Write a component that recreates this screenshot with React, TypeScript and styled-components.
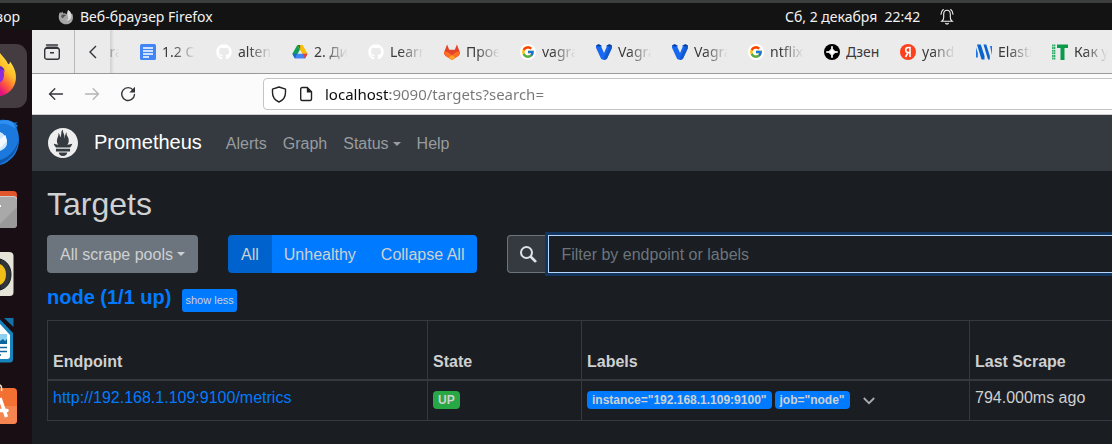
import React from "react";
import styled, { createGlobalStyle, css } from "styled-components";
import { FaGithub } from "react-icons/fa";
import { FcGoogle } from "react-icons/fc";
import { SiPrometheus } from "react-icons/si";

const GlobalStyle = createGlobalStyle`
  *, *::before, *::after { box-sizing: border-box; }
  body {
    margin: 0;
    background: #1a1d21;
    color: #ced0d2;
    font: 16px/24px "Liberation Sans", Arial, sans-serif;
    overflow: hidden;
  }
  button, input, select { font: inherit; margin: 0; }
  svg { display: block; flex: none; }
`;

const uiFont = css`
  font-family: "Noto Sans", "Open Sans", sans-serif;
`;

/* ---------- Desktop shell ---------- */

const Desktop = styled.div`
  display: flex;
  flex-direction: column;
  min-height: 100vh;
`;

const TopBar = styled.header`
  ${uiFont}
  display: grid;
  grid-template-columns: 1fr auto 1fr;
  align-items: center;
  height: 30px;
  border-top: 3px solid #3c3f3e;
  background: #131313;
  color: #f2f2f2;
  font-size: 14px;
  line-height: 27px;
`;

const TopLeft = styled.div`
  display: flex;
  align-items: center;
`;

const Activities = styled.button`
  display: flex;
  justify-content: flex-end;
  width: 20px;
  padding: 0;
  border: 0;
  background: none;
  color: inherit;
  overflow: hidden;
`;

const AppMenu = styled.button`
  display: flex;
  align-items: center;
  gap: 6px;
  margin-left: 38px;
  padding: 0;
  border: 0;
  background: none;
  color: inherit;
`;

const Clock = styled.button`
  display: flex;
  align-items: center;
  gap: 20px;
  padding: 0;
  border: 0;
  background: none;
  color: inherit;
  white-space: pre;
`;

const ClockSlot = styled.div`
  grid-column: 3;
  display: flex;
  justify-content: flex-start;
  padding-left: 229px;
`;

const Workspace = styled.div`
  display: flex;
  flex: 1;
`;

const Dock = styled.nav`
  display: flex;
  flex-direction: column;
  flex: none;
  gap: 2px;
  width: 32px;
  padding-top: 14px;
  background: #190e14;
`;

const DockItem = styled.button<{ $active?: boolean }>`
  width: ${(p) => (p.$active ? "27px" : "32px")};
  height: 64px;
  padding: 0;
  border: 0;
  border-radius: 0 11px 11px 0;
  background: ${(p) => (p.$active ? "#443c41" : "transparent")};
  overflow: hidden;
`;

const BrowserWindow = styled.div`
  flex: 1;
  min-width: 0;
  overflow: hidden;
`;

/* ---------- Browser chrome ---------- */

const TabBar = styled.div`
  ${uiFont}
  display: flex;
  height: 44px;
  border-bottom: 1px solid #999;
  background: #ebebeb;
  color: #3a3a3a;
  font-size: 14px;
`;

const ChromeButton = styled.button<{ $w: number; $divider?: boolean }>`
  display: flex;
  align-items: center;
  justify-content: center;
  flex: none;
  width: ${(p) => p.$w}px;
  padding: 0 ${(p) => (p.$divider ? "2px" : "0")} 0 0;
  border: 0;
  border-right: ${(p) => (p.$divider ? "1px solid #b9b9b9" : "0")};
  background: none;
  color: #33333a;
`;

const TabStrip = styled.div`
  display: flex;
  flex: 1;
  min-width: 0;
  overflow: hidden;
  box-shadow: inset 4px 0 3px -2px #cfcfcf;
`;

const TabItem = styled.button<{ $cut?: boolean }>`
  display: flex;
  align-items: center;
  justify-content: ${(p) => (p.$cut ? "flex-end" : "flex-start")};
  flex: none;
  gap: 6px;
  width: ${(p) => (p.$cut ? "22px" : "76px")};
  padding: 0 11px 0 ${(p) => (p.$cut ? "0" : "8px")};
  border: 0;
  background: none;
  color: inherit;
  overflow: hidden;
`;

const TabTitle = styled.span<{ $fits?: boolean }>`
  flex: none;
  width: 35px;
  overflow: hidden;
  text-align: left;
  white-space: nowrap;
  line-height: 24px;
  mask-image: ${(p) => (p.$fits ? "none" : "linear-gradient(90deg, #000 30%, transparent 96%)")};
`;

const UrlBar = styled.div`
  ${uiFont}
  display: flex;
  align-items: center;
  height: 41px;
  border-bottom: 1px solid #ccc;
  background: #fbfbfb;
`;

const NavButtons = styled.div`
  display: flex;
  flex: none;
  width: 231px;
  padding-left: 6px;
`;

const AddressBox = styled.label`
  display: flex;
  align-items: center;
  flex: 1;
  height: 32px;
  margin-right: -8px;
  padding-left: 7px;
  gap: 11px;
  border: 1px solid #c4c4c4;
  border-radius: 4px;
  background: #fff;
`;

const AddressInput = styled.input`
  flex: 1;
  min-width: 0;
  height: 24px;
  padding: 0;
  border: 0;
  outline: 0;
  background: linear-gradient(90deg, #0c0c0d 65px, #777 65px);
  background-clip: text;
  -webkit-background-clip: text;
  color: transparent;
  caret-color: #0c0c0d;
  font-size: 15px;
`;

/* ---------- Prometheus page ---------- */

const Navbar = styled.nav`
  display: flex;
  align-items: center;
  height: 56px;
  padding: 0 16px;
  background: #343a40;
`;

const Brand = styled.a`
  display: flex;
  align-items: center;
  gap: 16px;
  margin-right: 16px;
  color: #fff;
  font-size: 20px;
  text-decoration: none;
`;

const BrandName = styled.span`
  padding-bottom: 2px;
`;

const NavLink = styled.a`
  display: flex;
  align-items: center;
  gap: 4px;
  padding: 2px 8px 0;
  color: #999c9f;
  text-decoration: none;
`;

const Caret = styled.span`
  width: 0;
  height: 0;
  border: 4px solid transparent;
  border-top-color: currentColor;
  border-bottom: 0;
`;

const Page = styled.main`
  padding: 14px 0 0 15px;
`;

const Title = styled.h2`
  margin: 0 0 12px;
  font-size: 32px;
  font-weight: 400;
  line-height: 38px;
`;

const Filters = styled.div`
  display: flex;
  gap: 30px;
  margin-bottom: 12px;
`;

const PoolPicker = styled.div`
  position: relative;
  color: #ced0d2;

  ${Caret} {
    position: absolute;
    top: 17px;
    right: 13px;
    pointer-events: none;
  }
`;

const PoolSelect = styled.select`
  appearance: none;
  display: block;
  width: 151px;
  height: 38px;
  padding: 2px 24px 0 13px;
  border: 0;
  border-radius: 4px;
  background: #6c757d;
  color: inherit;
`;

const ButtonGroup = styled.div`
  display: flex;
  border-radius: 4px;
  overflow: hidden;
`;

const GroupButton = styled.button<{ $active?: boolean }>`
  position: relative;
  z-index: ${(p) => (p.$active ? 1 : 0)};
  height: 38px;
  padding: 2px 13px 0;
  border: 0;
  background: ${(p) => (p.$active ? "#0062cc" : "#007bff")};
  color: #ced0d2;

  & + & { margin-left: -1px; }
`;

const SearchGroup = styled.label`
  display: flex;
  flex: 1;
  min-width: 0;
  margin-right: -8px;
`;

const SearchAddon = styled.span`
  display: flex;
  align-items: center;
  justify-content: center;
  width: 41px;
  border: 1px solid #6c757d;
  border-right: 0;
  border-radius: 4px 0 0 4px;
  background: #343a40;
  color: #dee2e6;
`;

const SearchInput = styled.input`
  flex: 1;
  min-width: 0;
  height: 38px;
  padding: 2px 12px 0;
  border: 1px solid #b3d7ff;
  outline: 0;
  background: #1a1d21;
  box-shadow: 0 0 0 3px #12365e;
  color: #ced0d2;

  &::placeholder { color: #6c757d; opacity: 1; }
`;

const PoolHeader = styled.div`
  display: flex;
  align-items: flex-start;
  gap: 11px;
  margin-bottom: 8px;
`;

const PoolName = styled.h3`
  margin: 0;
  color: #007bff;
  font-size: 20px;
  line-height: 24px;
`;

const ShowLess = styled.button`
  height: 23px;
  margin-top: 4px;
  padding: 0 3px;
  border: 0;
  border-radius: 3px;
  background: #007bff;
  color: #ced0d2;
  font-size: 11px;
  line-height: 23px;
`;

const Targets = styled.table`
  table-layout: fixed;
  width: calc(100% + 8px);
  border-collapse: collapse;

  th, td {
    padding: 5px;
    border: 1px solid #343a40;
    text-align: left;
  }
  th {
    height: 59px;
    border-bottom-width: 2px;
    vertical-align: bottom;
  }
  td {
    height: 41px;
    vertical-align: top;
  }
`;

const Col = styled.col<{ $w?: number }>`
  width: ${(p) => (p.$w ? `${p.$w}px` : "auto")};
`;

const EndpointLink = styled.a`
  color: #007bff;
  text-decoration: none;
`;

const CellRow = styled.div`
  display: flex;
  align-items: center;
  gap: 3px;
  padding-top: 5px;
`;

const Badge = styled.span<{ $kind: "up" | "label" }>`
  padding: 0 5px;
  border-radius: 4px;
  background: ${(p) => (p.$kind === "up" ? "#28a745" : "#007bff")};
  color: #ced0d2;
  font-size: 12px;
  font-weight: 700;
  line-height: 18px;
  white-space: nowrap;
`;

const Expand = styled.button`
  margin-left: 10px;
  padding: 2px 0 0;
  border: 0;
  background: none;
  color: #a9abad;
`;

/* ---------- Icons ---------- */

const DocsIcon = () => (
  <svg width="16" height="16" viewBox="0 0 16 16">
    <rect width="16" height="16" rx="1.5" fill="#4285f4" />
    <path d="M3 4h10M3 7h10M3 10h10M3 13h6" stroke="#fff" strokeWidth="1.5" />
  </svg>
);

const DriveIcon = () => (
  <svg width="16" height="16" viewBox="0 0 16 16">
    <path d="M5.3 1 8 5.6 3 14.4 0.4 9.8z" fill="#0f9d58" />
    <path d="M5.3 1h5.3l5 8.8h-5.2z" fill="#fbbc04" />
    <path d="M5.3 1h2.8v4.6z" fill="#188038" />
    <path d="M5.4 9.8h10.2L13 14.4H2.8z" fill="#4285f4" />
    <path d="M10.4 9.8h5.2L13 14.4z" fill="#ea4335" />
    <path d="M0.4 9.8h5L2.8 14.4z" fill="#1967d2" />
  </svg>
);

const GitlabIcon = () => (
  <svg width="16" height="16" viewBox="0 0 16 16">
    <path d="M3.1.5 5.2 5.8h5.6L12.9.5l2.8 7.2c.5 1.6.1 3.1-1.4 4.3L8 16l-6.3-4C.2 10.800-.2 9.300.3 7.700z" fill="#e24329" />
    <path d="M.4 7.300C2.600 7.300 4.300 8.300 8 11.200c3.700-2.900 5.400-3.900 7.600-3.900.6 2 0 3.700-1.500 4.800L8 16l-6.100-3.900C.4 11-.2 9.300.4 7.300z" fill="#fc6d26" />
    <path d="M4.400 13.600 8 11.200l3.600 2.400L8 16z" fill="#fca326" />
  </svg>
);

const GoogleIcon = () => (
  <svg width="16" height="16" viewBox="0 0 16 16">
    <circle cx="8" cy="8" r="8" fill="#fff" />
    <FcGoogle x="1" y="1" width="14" height="14" />
  </svg>
);

const VagrantIcon = () => (
  <svg width="16" height="16" viewBox="0 0 16 16">
    <path d="M0 1.500 2.500.2 5.500 1.500v1.800L8 9l2.500-5.700V1.500L13.500.2 16 1.500v2.300L10.800 15 8 16l-2.800-1L0 3.800z" fill="#1868f2" />
    <path d="M13 3 16 1.500v2.300L10.800 15 8 16v-2z" fill="#1159cc" />
    <path d="M0 1.500 2.500.2 5.500 1.500 2.800 2.800zM10.500 1.500 13.500.2 16 1.500 13.200 2.800z" fill="#0e3f96" />
  </svg>
);

const ZenIcon = () => (
  <svg width="16" height="16" viewBox="0 0 16 16">
    <circle cx="8" cy="8" r="8" fill="#000" />
    <path d="M8 2.200Q8.300 7.700 13.800 8 8.300 8.300 8 13.800 7.700 8.300 2.200 8 7.700 7.700 8 2.200z" fill="#fff" stroke="#fff" />
  </svg>
);

const YandexIcon = () => (
  <svg width="16" height="16" viewBox="0 0 16 16">
    <circle cx="8" cy="8" r="8" fill="#fc3f1d" />
    <path d="M10 13V3.500H8.300C6.600 3.500 5.700 4.500 5.700 6s.9 2.500 2.500 2.500H10M8.200 8.500 5.500 13" fill="none" stroke="#fff" strokeWidth="1.600" />
  </svg>
);

const ElasticIcon = () => (
  <svg width="16" height="16" viewBox="0 0 16 16">
    <path d="M0 3.500V13.500H1.800V9z" fill="#1a73e8" />
    <path d="M1 .5h3.800L8.500 12v3.500H5.500z" fill="#0b63ce" />
    <path d="M7.500 .5h2.800L13.800 12v3.500H12z" fill="#0b63ce" />
    <path d="M14 2H16V11z" fill="#1a73e8" />
  </svg>
);

const ItIcon = () => (
  <svg width="16" height="16" viewBox="0 0 16 16">
    <path d="M5 .5h11V4h-3.500v12H8.500V4H5z" fill="#0a9b4a" />
    <path d="M.8.5v15.500M2.600.5v15.500" stroke="#2fae68" strokeWidth="1.500" strokeDasharray="2 .6" />
  </svg>
);

const GithubIcon = () => <FaGithub size={16} color="#fff" />;

const ArchiveIcon = () => (
  <svg width="16" height="16" viewBox="0 0 16 16" fill="none" stroke="currentColor" strokeWidth="1.400">
    <path d="M2.500 1h11" strokeLinecap="round" />
    <rect x=".7" y="4.200" width="14.600" height="11" rx="2" />
    <path d="M2 4.200C2 3.600 2.400 3.300 3 3.300h10c.6 0 1 .3 1 .9M6 8.700h4" />
  </svg>
);

const ChevronLeft = () => (
  <svg width="8" height="14" viewBox="0 0 8 14" fill="none" stroke="currentColor" strokeWidth="1.400">
    <path d="M7 1 1 7l6 6" />
  </svg>
);

const ArrowIcon = ({ forward }: { forward?: boolean }) => (
  <svg width="16" height="16" viewBox="0 0 16 16" fill="none" stroke={forward ? "#b4b4b8" : "#33333a"} strokeWidth="1.300" strokeLinecap="round">
    <path d={forward ? "M1.500 8h13M9.200 2.700 14.500 8l-5.300 5.300" : "M14.500 8h-13M6.800 2.700 1.500 8l5.300 5.300"} />
  </svg>
);

const ReloadIcon = () => (
  <svg width="16" height="16" viewBox="0 0 16 16">
    <path d="M13.300 4.300A6.400 6.400 0 1 0 14.500 8.500" fill="none" stroke="#33333a" strokeWidth="1.400" strokeLinecap="round" />
    <path d="M15 .8V6.500H9.300z" fill="#33333a" />
  </svg>
);

const ShieldIcon = () => (
  <svg width="16" height="17" viewBox="0 0 16 17" fill="none" stroke="#222" strokeWidth="1.400" strokeLinejoin="round">
    <path d="M8 1 14.500 3.200V6.500C14.500 11 12 14.300 8 16 4 14.300 1.500 11 1.500 6.500V3.200z" />
  </svg>
);

const PageIcon = () => (
  <svg width="16" height="16" viewBox="0 0 16 16">
    <path d="M4.200 1.500h5L13.500 5.800v7.200c0 .9-.6 1.500-1.500 1.500H4.200c-.9 0-1.500-.6-1.500-1.500V3c0-.9.6-1.500 1.500-1.500z" fill="none" stroke="#222" strokeWidth="1.400" />
    <path d="M8.800 1v5.400h5.200z" fill="#222" />
  </svg>
);

const BellIcon = () => (
  <svg width="14" height="18" viewBox="0 0 14 18" fill="none" stroke="#f2f2f2" strokeWidth="1.100" strokeLinecap="round">
    <path d="M7 2.200C4.600 2.200 3.700 4 3.700 6.200v3.300c0 1.600-.6 2.800-1.900 3.800h10.400c-1.300-1-1.900-2.200-1.900-3.800V6.200C10.300 4 9.400 2.200 7 2.200zM5.700 15.300c.7.900 1.900.9 2.600 0M3.300 1.500C1.900 2.600 1.100 4.300 1 6.300M10.700 1.500c1.400 1.100 2.200 2.800 2.300 4.800" />
  </svg>
);

const SmallFirefoxIcon = () => (
  <svg width="16" height="16" viewBox="0 0 16 16">
    <path d="M2 3 3 4.200 4.200 2.500 5.300 4.500C7 4 8 5 8.500 5.500L9.500 3 10 1.200C12 2 13 3.500 13.300 5l.9-.6C15.500 8 15.300 11 13 13.500 9.800 16.300 5.300 15.700 2.700 13 .2 10.300.2 6 2 3z" fill="#a6a6a6" />
    <path d="M10 1c2.500 1.500 3.700 4 3.300 6.800-.5 3.200-3.500 4.300-5.800 3.200 2 .3 3.200-1 2.700-2.500C9.600 6.800 9 5 10 1z" fill="#dedede" />
    <path d="M3.200 6.500C4 5 7 5 8.200 6.600 6 6.800 6.300 8.500 4.600 9.200 3.500 8.800 3 7.700 3.200 6.500z" fill="#555" />
  </svg>
);

const SearchIcon = () => (
  <svg width="18" height="18" viewBox="0 0 18 18" fill="none" stroke="currentColor" strokeLinecap="round">
    <circle cx="7.500" cy="7.500" r="5.500" strokeWidth="2" />
    <path d="m12 12 4.300 4.200" strokeWidth="2.600" />
  </svg>
);

const ChevronDown = () => (
  <svg width="12" height="8" viewBox="0 0 12 8" fill="none" stroke="currentColor" strokeWidth="1.800">
    <path d="m.8 1 5.200 5.200L11.200 1" />
  </svg>
);

const FirefoxDockIcon = () => (
  <svg width="27" height="64" viewBox="0 0 27 64">
    <defs>
      <linearGradient id="flame" x1=".7" y1="0" x2=".3" y2="1">
        <stop offset="0" stopColor="#fff44f" />
        <stop offset=".45" stopColor="#ffbd2a" />
        <stop offset=".75" stopColor="#ff5a3a" />
        <stop offset="1" stopColor="#e3127f" />
      </linearGradient>
    </defs>
    <path d="M0 9C3 13 6 15 8 20c1 .5 1.800-.5 2-2.500C15 24 17 31 15.500 37.500 13.500 46 7 51 0 52z" fill="url(#flame)" />
    <path d="M0 23c3 1 4 4 4 7.500S2.500 37.500 0 38.500z" fill="#8a2be2" />
    <path d="M0 22c3 .5 4.500 3 4.500 6C3 25.500 1.500 25 0 25.500z" fill="#5b2bb5" />
  </svg>
);

const ThunderbirdIcon = () => (
  <svg width="32" height="64" viewBox="0 0 32 64">
    <path d="M0 10c4-.5 9-.5 14 2.500h4L15.500 14l2.500 1.500-1.500 2C20.500 27 20 39 13 47 9 51 5 54 0 55z" fill="#1b78dc" />
    <path d="M0 11c5-1.500 9-1 12 1 3 2 2 4 4 7C9 14 5 13 0 14z" fill="#2f8ff0" />
    <path d="M18.500 31C17 42 10 50 0 54v-4c8-2 15-9 18.500-19z" fill="#0d57ad" />
    <path d="M0 22c4 1.500 7 5.500 7 11 0 4-3 6-7 8z" fill="#cfe8fb" />
    <path d="M0 29 5.500 25 7 31 0 38z" fill="#f3faff" />
  </svg>
);

const FilesIcon = () => (
  <svg width="32" height="64" viewBox="0 0 32 64">
    <path d="M0 15h13c3 0 4 1.500 4 4v6H0z" fill="#e2562c" />
    <path d="M0 20h13c3 0 4 1 4 3v25c0 3-1.500 4-4 4H0z" fill="#a9a9a9" />
    <path d="M17 31v17c0 3-1.500 4-4 4H0V48z" fill="#999" />
    <path d="M0 20.500h13c2.500 0 3.500 1 3.500 2.500" fill="none" stroke="#d0d0d0" />
    <path d="M0 30h1" stroke="#fff" strokeWidth="2" />
  </svg>
);

const RhythmboxIcon = () => (
  <svg width="32" height="64" viewBox="0 0 32 64">
    <path d="M0 10h9c3 0 4.500 1.500 4.500 4v36c0 3-1.500 4-4 4H0z" fill="#e6e3d8" />
    <path d="M0 17C7 19 11 25 11 32.500S7 46 0 48z" fill="#30363a" stroke="#171b1e" />
    <path d="M0 22c4 2 6 5.500 6 10.500S4 41 0 43z" fill="#f2be18" />
  </svg>
);

const WriterIcon = () => (
  <svg width="32" height="64" viewBox="0 0 32 64">
    <path d="M4 10h9.500v9z" fill="#1671a8" />
    <path d="M0 11.500 13 25v26c0 2.500-1 3.500-3.500 3.500H0z" fill="#1783bd" />
    <path d="M0 16 10 27v21c0 2-1 3-3 3H0z" fill="#fff" />
    <path d="M0 26h7v10H0z" fill="#8ed0ef" />
    <path d="m0 33 3-2 2 2 2-2v5H0z" fill="#0c679e" />
    <path d="M0 39.500h7M0 43.500h7M0 47h1" stroke="#0c679e" strokeWidth="1.600" />
  </svg>
);

const SoftwareIcon = () => (
  <svg width="32" height="64" viewBox="0 0 32 64">
    <path d="M0 14h13c3 0 4 1.500 4 4v28c0 3-1.500 4-4 4H0z" fill="#f37033" />
    <path d="M0 32h17v14c0 3-1.500 4-4 4H0z" fill="#f58550" />
    <path d="M0 11c1.500 1 2 3 1.500 6" fill="none" stroke="#f5e3c8" strokeWidth="1.600" />
    <path d="M0 24 6.500 43" stroke="#fff" strokeWidth="3.500" />
    <path d="M0 36.500h7" stroke="#fff" strokeWidth="3.500" strokeLinecap="round" />
  </svg>
);

/* ---------- Data ---------- */

const tabs = [
  { title: "1.2 Стек", Icon: DocsIcon },
  { title: "alteny", Icon: GithubIcon },
  { title: "2. Дис", Icon: DriveIcon },
  { title: "Learn", Icon: GithubIcon },
  { title: "Проек", Icon: GitlabIcon },
  { title: "vagrant", Icon: GoogleIcon },
  { title: "Vagrant", Icon: VagrantIcon },
  { title: "Vagrant", Icon: VagrantIcon },
  { title: "ntflix", Icon: GoogleIcon },
  { title: "Дзен", Icon: ZenIcon, fits: true },
  { title: "yande", Icon: YandexIcon },
  { title: "Elastic", Icon: ElasticIcon },
  { title: "Как ус", Icon: ItIcon },
];

const dockItems = [
  { name: "Firefox", Icon: FirefoxDockIcon, active: true },
  { name: "Thunderbird", Icon: ThunderbirdIcon },
  { name: "Files", Icon: FilesIcon },
  { name: "Rhythmbox", Icon: RhythmboxIcon },
  { name: "Writer", Icon: WriterIcon },
  { name: "Software", Icon: SoftwareIcon },
];

const labels = ['instance="192.168.1.109:9100"', 'job="node"'];

export default function App() {
  return (
    <Desktop>
      <GlobalStyle />
      <TopBar>
        <TopLeft>
          <Activities>Обзор</Activities>
          <AppMenu>
            <SmallFirefoxIcon />
            Веб-браузер Firefox
          </AppMenu>
        </TopLeft>
        <ClockSlot>
          <Clock>
            {"Сб, 2 декабря  22:42"}
            <BellIcon />
          </Clock>
        </ClockSlot>
      </TopBar>
      <Workspace>
        <Dock>
          {dockItems.map(({ name, Icon, active }) => (
            <DockItem key={name} aria-label={name} $active={active}>
              <Icon />
            </DockItem>
          ))}
        </Dock>
        <BrowserWindow>
          <TabBar>
            <ChromeButton $w={43} $divider aria-label="Firefox View">
              <ArchiveIcon />
            </ChromeButton>
            <ChromeButton $w={35} aria-label="Scroll tabs left">
              <ChevronLeft />
            </ChromeButton>
            <TabStrip>
              <TabItem $cut>
                <TabTitle>vagrant</TabTitle>
              </TabItem>
              {tabs.map(({ title, Icon, fits }, i) => (
                <TabItem key={i}>
                  <Icon />
                  <TabTitle $fits={fits}>{title}</TabTitle>
                </TabItem>
              ))}
            </TabStrip>
          </TabBar>
          <UrlBar>
            <NavButtons>
              <ChromeButton $w={36} aria-label="Back"><ArrowIcon /></ChromeButton>
              <ChromeButton $w={36} aria-label="Forward"><ArrowIcon forward /></ChromeButton>
              <ChromeButton $w={36} aria-label="Reload"><ReloadIcon /></ChromeButton>
            </NavButtons>
            <AddressBox>
              <ShieldIcon />
              <PageIcon />
              <AddressInput aria-label="Address" defaultValue="localhost:9090/targets?search=" spellCheck={false} />
            </AddressBox>
          </UrlBar>
          <Navbar>
            <Brand href="#">
              <SiPrometheus size={30} color="#eee" />
              <BrandName>Prometheus</BrandName>
            </Brand>
            <NavLink href="#alerts">Alerts</NavLink>
            <NavLink href="#graph">Graph</NavLink>
            <NavLink href="#status">Status<Caret /></NavLink>
            <NavLink href="#help">Help</NavLink>
          </Navbar>
          <Page>
            <Title>Targets</Title>
            <Filters>
              <PoolPicker>
                <PoolSelect aria-label="Scrape pool">
                  <option>All scrape pools</option>
                </PoolSelect>
                <Caret />
              </PoolPicker>
              <ButtonGroup>
                <GroupButton $active>All</GroupButton>
                <GroupButton>Unhealthy</GroupButton>
                <GroupButton>Collapse All</GroupButton>
              </ButtonGroup>
              <SearchGroup>
                <SearchAddon><SearchIcon /></SearchAddon>
                <SearchInput aria-label="Filter" placeholder="Filter by endpoint or labels" />
              </SearchGroup>
            </Filters>
            <PoolHeader>
              <PoolName>node (1/1 up)</PoolName>
              <ShowLess>show less</ShowLess>
            </PoolHeader>
            <Targets>
              <colgroup>
                <Col $w={380} />
                <Col $w={154} />
                <Col $w={388} />
                <Col />
              </colgroup>
              <thead>
                <tr>
                  <th>Endpoint</th>
                  <th>State</th>
                  <th>Labels</th>
                  <th>Last Scrape</th>
                </tr>
              </thead>
              <tbody>
                <tr>
                  <td><EndpointLink href="#metrics">http://192.168.1.109:9100/metrics</EndpointLink></td>
                  <td><CellRow><Badge $kind="up">UP</Badge></CellRow></td>
                  <td>
                    <CellRow>
                      {labels.map((l) => <Badge key={l} $kind="label">{l}</Badge>)}
                      <Expand aria-label="Show more labels"><ChevronDown /></Expand>
                    </CellRow>
                  </td>
                  <td>794.000ms ago</td>
                </tr>
              </tbody>
            </Targets>
          </Page>
        </BrowserWindow>
      </Workspace>
    </Desktop>
  );
}
